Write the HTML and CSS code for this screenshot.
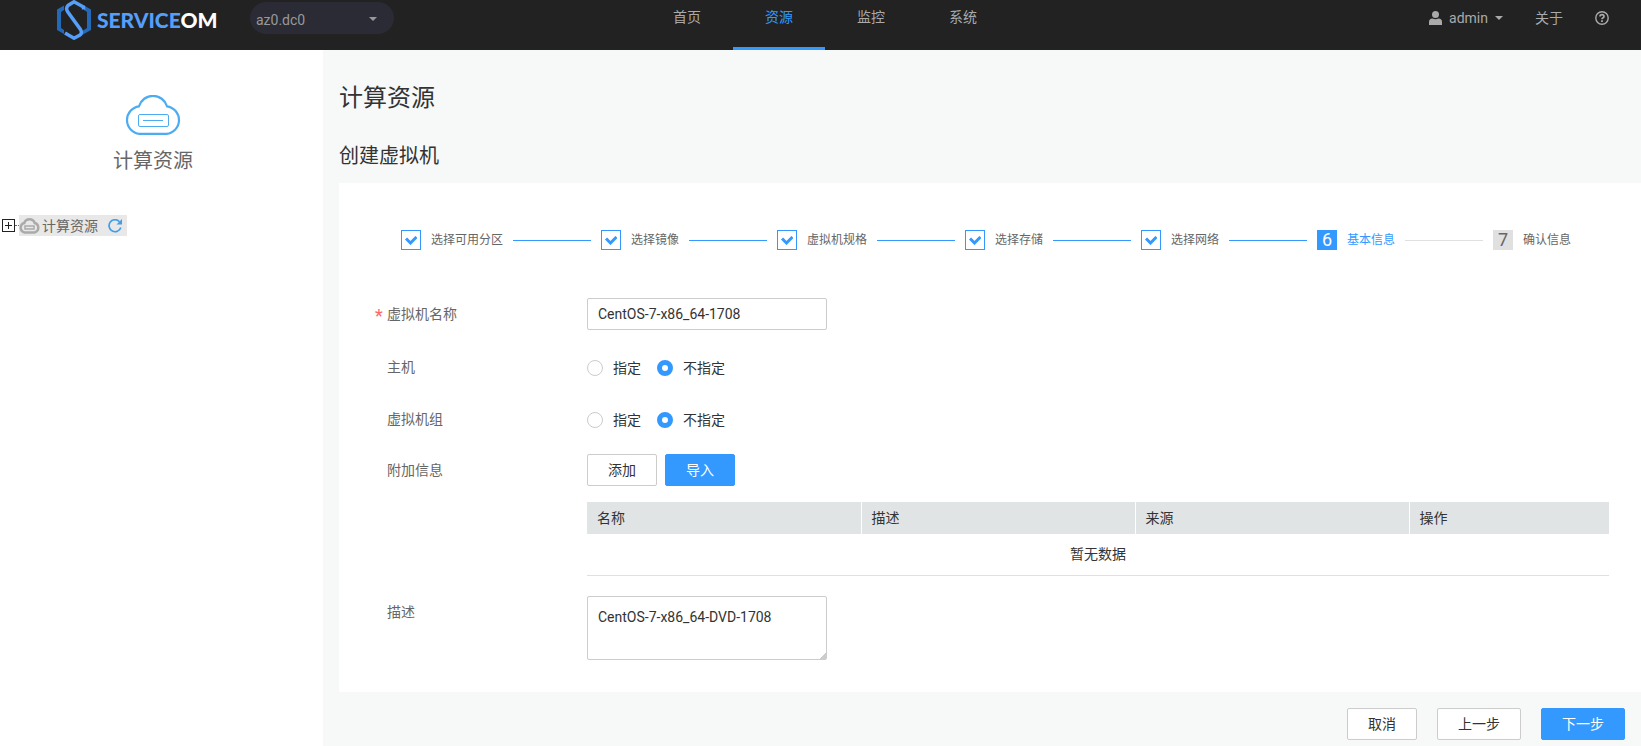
FILE: index.html
```html
<!DOCTYPE html>
<html lang="zh-CN">
<head>
    <meta charset="UTF-8">
    <title>ServiceOM</title>
    <link rel="stylesheet" href="styles.css">
</head>
<body>
    <header class="header">
        <div class="header-left">
            <a href="#" class="logo">
                <svg width="36" height="40" viewBox="0 0 36 40">
                    <path d="M8 5.500 L1 9.500 V30 L8 34 V30 L5 28 V12 L8 10 Z" fill="#2468b8"/>
                    <path d="M28 5.500 L35 9.500 V30 L27 34.500 V30.500 L31 28 V12 L28 10 Z" fill="#2468b8"/>
                    <path d="M27.500 9.500 V7 L18 1.800 L12 5.500 Q9.500 8 11.500 11.500 L24.500 29.500 Q26.500 33 24 35 L18 38.200 L9 33" fill="none" stroke="#559ffb" stroke-width="3.500"/>
                </svg>
                <span class="logo-text">SERVICE<span class="logo-om">OM</span></span>
            </a>
            <div class="region">
                <select class="region-select" aria-label="区域">
                    <option>az0.dc0</option>
                </select>
            </div>
        </div>
        <nav class="nav">
            <a href="#">首页</a>
            <a href="#" class="active">资源</a>
            <a href="#">监控</a>
            <a href="#">系统</a>
        </nav>
        <div class="header-right">
            <a href="#" class="user">
                <svg width="13" height="14" viewBox="0 0 13 14" fill="#aaa">
                    <circle cx="6.500" cy="3.500" r="3.500"/>
                    <path d="M0 14 V11 Q0 7.500 3.500 7.500 Q6.500 9 9.500 7.500 Q13 7.500 13 11 V14 Z"/>
                </svg>
                <span>admin</span>
                <i class="caret"></i>
            </a>
            <a href="#" class="about">关于</a>
            <a href="#" class="help" aria-label="帮助">
                <svg width="14" height="14" viewBox="0 0 14 14" fill="none" stroke="#aaa">
                    <circle cx="7" cy="7" r="6.200" stroke-width="1.400"/>
                    <path d="M5 5.600 Q5 3.700 7 3.700 Q9 3.700 9 5.400 Q9 6.400 7.800 6.900 Q7 7.300 7 8.300" stroke-width="1.700"/>
                    <path d="M7 9.300 V11" stroke-width="1.800"/>
                </svg>
            </a>
        </div>
    </header>

    <div class="container">
        <aside class="sidebar">
            <div class="sidebar-title">
                <svg width="56" height="40" viewBox="0 0 56 40" fill="none" stroke="#4cacf2">
                    <path d="M14.500 38.900 H41.500 A13.900 13.900 0 0 0 42 11.300 A14.600 14.600 0 0 0 14 11.300 A13.900 13.900 0 0 0 14.500 38.900 Z" stroke-width="2.200"/>
                    <rect x="13.500" y="19.500" width="30" height="12" rx="1.500"/>
                    <path d="M18 25.500 H38"/>
                </svg>
                <span>计算资源</span>
            </div>
            <div class="tree">
                <button class="tree-toggle" aria-label="展开">
                    <svg width="13" height="13" viewBox="0 0 13 13" fill="none" stroke="#222">
                        <rect x="0.500" y="0.500" width="12" height="12"/>
                        <path d="M3 6.500 H10 M6.500 3 V10"/>
                    </svg>
                </button>
                <span class="tree-line"></span>
                <a href="#" class="tree-node">
                    <svg width="21" height="16" viewBox="0 0 21 16" fill="none" stroke="#aaa">
                        <path d="M5.500 14.500 H15.500 A4.900 4.900 0 0 0 15.700 5 A5.500 5.500 0 0 0 5.300 5 A4.900 4.900 0 0 0 5.500 14.500 Z" stroke-width="2.500"/>
                        <rect x="6" y="8" width="9" height="3" stroke-width="1.500"/>
                    </svg>
                    <span>计算资源</span>
                    <svg class="refresh" width="14" height="14" viewBox="0 0 14 14" fill="none" stroke="#3f9fe8">
                        <path d="M11.500 2.700 A6 6 0 1 0 12.800 8.500" stroke-width="1.700"/>
                        <path d="M14 0 V5.500 H8.500 Z" fill="#3f9fe8" stroke="none"/>
                    </svg>
                </a>
            </div>
        </aside>

        <main class="main">
            <h1>计算资源</h1>
            <h2>创建虚拟机</h2>

            <form class="card">
                <ol class="steps">
                    <li class="step done"><span class="step-icon"><svg width="12" height="9" viewBox="0 0 12 9"><path d="M1 2.500 L5.500 7 L11.500 1" /></svg></span>选择可用分区</li>
                    <li class="step done"><span class="step-icon"><svg width="12" height="9" viewBox="0 0 12 9"><path d="M1 2.500 L5.500 7 L11.500 1" /></svg></span>选择镜像</li>
                    <li class="step done"><span class="step-icon"><svg width="12" height="9" viewBox="0 0 12 9"><path d="M1 2.500 L5.500 7 L11.500 1" /></svg></span>虚拟机规格</li>
                    <li class="step done"><span class="step-icon"><svg width="12" height="9" viewBox="0 0 12 9"><path d="M1 2.500 L5.500 7 L11.500 1" /></svg></span>选择存储</li>
                    <li class="step done"><span class="step-icon"><svg width="12" height="9" viewBox="0 0 12 9"><path d="M1 2.500 L5.500 7 L11.500 1" /></svg></span>选择网络</li>
                    <li class="step current"><span class="step-icon">6</span>基本信息</li>
                    <li class="step"><span class="step-icon">7</span>确认信息</li>
                </ol>

                <div class="row">
                    <label class="label required" for="vmName">虚拟机名称</label>
                    <input type="text" class="input" id="vmName" value="CentOS-7-x86_64-1708">
                </div>

                <div class="row radio-row" role="radiogroup" aria-labelledby="hostLabel">
                    <span class="label" id="hostLabel">主机</span>
                    <div class="radios">
                        <label><input type="radio" name="host">指定</label>
                        <label><input type="radio" name="host" checked>不指定</label>
                    </div>
                </div>

                <div class="row radio-row" role="radiogroup" aria-labelledby="groupLabel">
                    <span class="label" id="groupLabel">虚拟机组</span>
                    <div class="radios">
                        <label><input type="radio" name="group">指定</label>
                        <label><input type="radio" name="group" checked>不指定</label>
                    </div>
                </div>

                <div class="row">
                    <span class="label">附加信息</span>
                    <div class="extra">
                        <div class="extra-buttons">
                            <button type="button" class="btn">添加</button>
                            <button type="button" class="btn primary">导入</button>
                        </div>
                        <table class="table">
                            <thead>
                                <tr>
                                    <th>名称</th>
                                    <th>描述</th>
                                    <th>来源</th>
                                    <th class="action">操作</th>
                                </tr>
                            </thead>
                            <tbody>
                                <tr>
                                    <td colspan="4">暂无数据</td>
                                </tr>
                            </tbody>
                        </table>
                    </div>
                </div>

                <div class="row">
                    <label class="label" for="vmDesc">描述</label>
                    <textarea class="input textarea" id="vmDesc">CentOS-7-x86_64-DVD-1708</textarea>
                </div>
            </form>

            <div class="footer">
                <button type="button" class="btn">取消</button>
                <button type="button" class="btn">上一步</button>
                <button type="button" class="btn primary">下一步</button>
            </div>
        </main>
    </div>
</body>
</html>
```
FILE: styles.css
```css
* {
    box-sizing: border-box;
}

body {
    margin: 0;
    min-height: 100vh;
    display: flex;
    flex-direction: column;
    background-color: #f7f9f8;
    color: #333;
    font-family: Roboto, "Noto Sans CJK SC", sans-serif;
    font-size: 14px;
    line-height: 20px;
}

a {
    color: inherit;
    text-decoration: none;
}

button, input, select, textarea {
    font: inherit;
    color: inherit;
}

svg {
    display: block;
    flex-shrink: 0;
}

/* Header */
.header {
    display: grid;
    grid-template-columns: 1fr auto 1fr;
    height: 50px;
    padding-left: 9px;
    background-color: #222;
    color: #aaa;
}

.header-left {
    display: flex;
    align-items: flex-start;
    padding-left: 47px;
}

.logo {
    display: flex;
    align-items: center;
    gap: 5px;
    width: 194px;
}

.logo-text {
    font-family: Lato, sans-serif;
    font-size: 21px;
    font-weight: 900;
    color: #559ffb;
}

.logo-om {
    color: #fff;
}

.region {
    position: relative;
    margin-top: 2px;
}

.region-select {
    appearance: none;
    width: 144px;
    height: 32px;
    padding: 4px 28px 0 6px;
    border: none;
    border-radius: 16px;
    background-color: #2a2b35;
    color: #999;
}

.region::after {
    content: "";
    position: absolute;
    top: 15px;
    right: 17px;
    border: 4px solid transparent;
    border-top-color: #999;
    border-bottom: none;
    pointer-events: none;
}

.nav {
    display: flex;
}

.nav a {
    padding: 7px 32px 0;
    border-bottom: 3px solid transparent;
}

.nav a.active {
    color: #39f;
    border-bottom-color: #39f;
}

.header-right {
    display: flex;
    justify-content: flex-end;
    align-items: center;
    height: 36px;
    padding-right: 32px;
    gap: 32px;
}

.user {
    display: flex;
    align-items: center;
    gap: 7px;
}

.caret {
    border: 4px solid transparent;
    border-top-color: #aaa;
    border-bottom: none;
}

/* Sidebar */
.container {
    display: flex;
    flex: 1;
}

.sidebar {
    width: 323px;
    flex-shrink: 0;
    background-color: #fff;
    color: #666;
}

.sidebar-title {
    display: flex;
    flex-direction: column;
    align-items: center;
    gap: 10px;
    padding: 45px 17px 0 0;
    font-size: 20px;
    line-height: 32px;
}

.tree {
    display: flex;
    align-items: center;
    margin-top: 38px;
    padding-left: 2px;
}

.tree-toggle {
    padding: 0;
    border: none;
    background: none;
    cursor: pointer;
}

.tree-line {
    width: 4px;
    border-top: 1px dotted #666;
}

.tree-node {
    display: flex;
    align-items: center;
    gap: 2px;
    height: 21px;
    padding-right: 5px;
    background-color: #e8e8e8;
}

.refresh {
    margin-left: 8px;
}

/* Main */
.main {
    flex: 1;
    min-width: 0;
    padding-left: 16px;
}

h1, h2 {
    margin: 0;
    font-weight: 400;
}

h1 {
    padding-top: 32px;
    font-size: 24px;
    line-height: 32px;
}

h2 {
    padding: 26px 0 11px;
    font-size: 20px;
    line-height: 32px;
}

.card {
    padding: 47px 32px 32px 48px;
    background-color: #fff;
}

.steps {
    display: flex;
    margin: 0;
    padding: 0 38px 48px 14px;
    list-style: none;
    font-size: 12px;
    color: #666;
}

.step {
    display: flex;
    align-items: center;
    gap: 10px;
    flex: 1 1 auto;
    white-space: nowrap;
}

.step:last-child {
    flex: none;
}

/* connector to the next step */
.step:not(:last-child)::after {
    content: "";
    flex: 1;
    height: 1px;
    margin-right: 10px;
    background-color: #e0e0e0;
}

.step.done::after {
    background-color: #39f !important;
}

.step-icon {
    display: flex;
    justify-content: center;
    align-items: center;
    width: 20px;
    height: 20px;
    background-color: #e0e0e0;
    font-size: 18px;
}

.step.done .step-icon {
    border: 1px solid #39f;
    background-color: #fff;
}

.step-icon path {
    fill: none;
    stroke: #39f;
    stroke-width: 3;
}

.step.current {
    color: #39f;
}

.step.current .step-icon {
    background-color: #39f;
    color: #fff;
}

/* Form */
.row {
    display: flex;
    align-items: flex-start;
    margin-bottom: 20px;
}

.radio-row {
    margin-bottom: 16px;
}

.row:last-child {
    margin-bottom: 0;
}

.label {
    position: relative;
    width: 200px;
    flex-shrink: 0;
    line-height: 32px;
    color: #666;
}

.radio-row .label {
    line-height: 34px;
}

.required::before {
    content: "*";
    position: absolute;
    top: 2px;
    left: -12px;
    color: #f66;
    font-size: 18px;
}

.input {
    width: 240px;
    height: 32px;
    padding: 0 10px;
    border: 1px solid #ccc;
    border-radius: 2px;
    background-color: #fff;
}

.textarea {
    height: 64px;
    padding: 10px;
    resize: both;
}

.textarea::-webkit-resizer {
    background: linear-gradient(135deg, transparent 77%, #ccc 77%);
}

.radios {
    display: flex;
    gap: 16px;
    line-height: 36px;
}

.radios label {
    display: flex;
    align-items: center;
    gap: 10px;
}

.radios input {
    appearance: none;
    width: 16px;
    height: 16px;
    margin: 0;
    border: 1px solid #ccc;
    border-radius: 50%;
    background-color: #fff;
}

.radios input:checked {
    border: 5px solid #39f;
}

.extra {
    flex: 1;
}

.extra-buttons {
    display: flex;
    gap: 8px;
    margin-bottom: 16px;
}

.btn {
    height: 32px;
    padding: 0 20px;
    border: 1px solid #ccc;
    border-radius: 2px;
    background-color: #fff;
    cursor: pointer;
}

.btn.primary {
    border-color: #39f;
    background-color: #39f;
    color: #fff;
}

.table {
    width: 100%;
    border-collapse: collapse;
    table-layout: fixed;
}

.table th {
    height: 32px;
    padding: 0 10px;
    border-right: 1px solid #fff;
    background-color: #e0e4e4;
    font-weight: 400;
    text-align: left;
}

.table th.action {
    width: 200px;
    border-right: none;
}

.table td {
    height: 41px;
    padding: 0;
    border-bottom: 1px solid #e0e0e0;
    text-align: center;
}

.footer {
    display: flex;
    justify-content: flex-end;
    gap: 20px;
    padding: 16px 16px 7px 0;
}
```
